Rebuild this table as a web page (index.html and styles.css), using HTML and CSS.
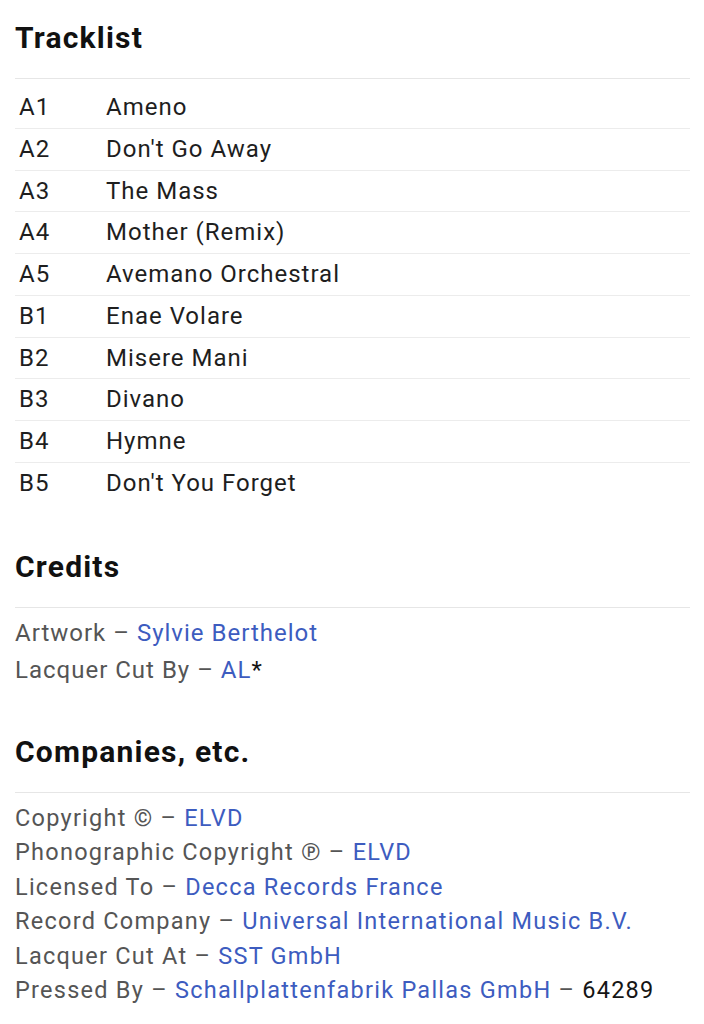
FILE: index.html
```html
<!DOCTYPE html>
<html>
<head>
<meta charset="utf-8">
<link rel="stylesheet" href="styles.css">
</head>
<body>
<section class="section tracklist">
  <h2 class="heading">Tracklist</h2>
  <div class="tracks">
    <div class="track"><span class="pos">A1</span><span class="title">Ameno</span></div>
    <div class="track"><span class="pos">A2</span><span class="title">Don't Go Away</span></div>
    <div class="track"><span class="pos">A3</span><span class="title">The Mass</span></div>
    <div class="track"><span class="pos">A4</span><span class="title">Mother (Remix)</span></div>
    <div class="track"><span class="pos">A5</span><span class="title">Avemano Orchestral</span></div>
    <div class="track"><span class="pos">B1</span><span class="title">Enae Volare</span></div>
    <div class="track"><span class="pos">B2</span><span class="title">Misere Mani</span></div>
    <div class="track"><span class="pos">B3</span><span class="title">Divano</span></div>
    <div class="track"><span class="pos">B4</span><span class="title">Hymne</span></div>
    <div class="track"><span class="pos">B5</span><span class="title">Don't You Forget</span></div>
  </div>
</section>
<section class="section credits">
  <h2 class="heading">Credits</h2>
  <ul class="list">
    <li>Artwork – <a class="link">Sylvie Berthelot</a></li>
    <li>Lacquer Cut By – <a class="link">AL</a><span class="dark">*</span></li>
  </ul>
</section>
<section class="section companies">
  <h2 class="heading">Companies, etc.</h2>
  <ul class="list list-tight">
    <li>Copyright © – <a class="link">ELVD</a></li>
    <li>Phonographic Copyright ℗ – <a class="link">ELVD</a></li>
    <li>Licensed To – <a class="link">Decca Records France</a></li>
    <li>Record Company – <a class="link">Universal International Music B.V.</a></li>
    <li>Lacquer Cut At – <a class="link">SST GmbH</a></li>
    <li>Pressed By – <a class="link">Schallplattenfabrik Pallas GmbH</a> – <span class="dark">64289</span></li>
  </ul>
</section>
</body>
</html>
```

FILE: styles.css
```css
html, body {
  margin: 0;
  padding: 0;
  background: #ffffff;
}
body {
  font-family: Roboto, "Noto Sans", sans-serif;
  color: #1c1c1c;
  padding: 20px 14px 0 15px;
}
.section {
  margin: 0;
}
.heading {
  margin: 0;
  font-size: 30px;
  line-height: 36px;
  font-weight: 700;
  letter-spacing: 1.2px;
  color: #111111;
  padding-bottom: 22px;
  border-bottom: 1px solid #e6e6e6;
}
.tracks {
  margin-top: 8px;
}
.track {
  display: flex;
  font-size: 24px;
  line-height: 40.75px;
  letter-spacing: 1px;
  color: #1e1e1e;
  border-bottom: 1px solid #ececec;
}
.track:last-child {
  border-bottom: none;
}
.pos {
  width: 87px;
  padding-left: 4px;
  flex: none;
}
.credits {
  margin-top: 45px;
}
.companies {
  margin-top: 45px;
}
.list {
  list-style: none;
  margin: 7px 0 0 0;
  padding: 0;
  font-size: 24px;
  line-height: 37px;
  letter-spacing: 1px;
  color: #555555;
}
.list-tight {
  line-height: 34.6px;
  font-size: 23.5px;
  letter-spacing: 1.25px;
  margin-top: 8px;
}
.link {
  color: #3d5cbf;
  text-decoration: none;
}
.dark {
  color: #151515;
}
```
